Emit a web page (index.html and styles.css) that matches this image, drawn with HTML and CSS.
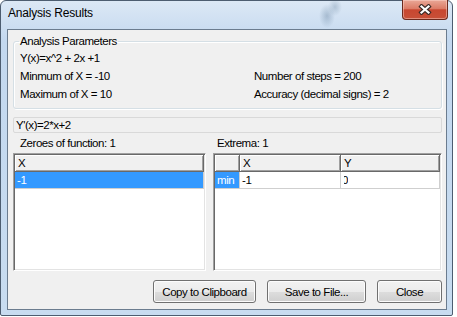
FILE: index.html
```html
<!DOCTYPE html>
<html lang="en">
<head>
  <meta charset="UTF-8" />
  <title>Analysis Results</title>
  <link rel="stylesheet" href="styles.css">
</head>
<body>

  <div class="window">
    <div class="titlebar">
      <span class="title">Analysis Results</span>
      <button class="close-btn" title="Close">
        <svg width="14" height="11" viewBox="0 0 14 11">
          <path d="M3.5 2.5 L10.5 8.5 M10.5 2.5 L3.5 8.5" stroke="#3d2c28" stroke-width="4.4" stroke-linecap="square" fill="none"/>
          <path d="M3.5 2.5 L10.5 8.5 M10.5 2.5 L3.5 8.5" stroke="#fff" stroke-width="2.2" stroke-linecap="square" fill="none"/>
        </svg>
      </button>
    </div>

    <div class="client">
      <fieldset class="params">
        <legend>Analysis Parameters</legend>
        <div class="param-grid">
          <div>Y(x)=x^2 + 2x +1</div><div></div>
          <div>Minmum of X = -10</div><div>Number of steps = 200</div>
          <div>Maximum of X = 10</div><div>Accuracy (decimal signs) = 2</div>
        </div>
      </fieldset>

      <div class="derivative">Y'(x)=2*x+2</div>

      <div class="panes">
        <div class="pane zeroes">
          <div class="pane-label">Zeroes of function: 1</div>
          <div class="grid">
            <div class="grid-row head"><div class="cell">X</div></div>
            <div class="grid-row"><div class="cell selected">-1</div></div>
          </div>
        </div>
        <div class="pane extrema">
          <div class="pane-label">Extrema: 1</div>
          <div class="grid">
            <div class="grid-row head"><div class="cell"></div><div class="cell">X</div><div class="cell">Y</div></div>
            <div class="grid-row"><div class="cell selected">min</div><div class="cell">-1</div><div class="cell flush"><span class="cut">0</span></div></div>
          </div>
        </div>
      </div>

      <div class="buttons">
        <button class="btn btn-copy">Copy to Clipboard</button>
        <button class="btn btn-save">Save to File...</button>
        <button class="btn btn-close">Close</button>
      </div>
    </div>
  </div>

</body>
</html>
```

FILE: styles.css
```css
* {
  box-sizing: border-box;
}
body {
  margin: 0;
  background: #fff;
  font-family: "Liberation Sans", Arial, sans-serif;
  font-size: 11.5px;
  letter-spacing: -0.45px;
  color: #000;
}
.window {
  width: 453px;
  height: 316px;
  border: 1px solid #4d5d70;
  border-radius: 6px 6px 2px 2px;
  background: linear-gradient(#dce8f5, #c3d8ef 40px, #c8dcf0);
  display: flex;
  flex-direction: column;
}
.titlebar {
  height: 28px;
  display: flex;
  justify-content: space-between;
  align-items: flex-start;
  background:
    radial-gradient(8px 12px at 326px 15px, rgba(85, 115, 145, 0.35), transparent),
    radial-gradient(7px 9px at 334px 6px, rgba(85, 115, 145, 0.3), transparent);
}
.title {
  padding: 5px 0 0 7px;
  line-height: 15px;
  font-size: 12px;
  letter-spacing: -0.2px;
}
.close-btn {
  width: 46px;
  height: 20px;
  margin: -1px 4px 0 0;
  padding: 0;
  border: 1px solid #6b2a1e;
  border-top: none;
  border-radius: 0 0 4px 4px;
  background: linear-gradient(#eaa897, #dc7c67 45%, #c84730 52%, #c85038);
  box-shadow: inset 0 0 0 1px rgba(255, 220, 210, 0.45);
  display: flex;
  align-items: center;
  justify-content: center;
}
.client {
  flex: 1;
  margin: 0 5px 5px 6px;
  border: 1px solid #6b7c8f;
  background: #f0f0f0;
  padding: 5px 4px 0 5px;
  display: flex;
  flex-direction: column;
}
.params {
  margin: 0;
  min-width: 0;
  padding: 1px 6px 5px;
  border: 1px solid #d5dfe5;
  border-radius: 3px;
  box-shadow: inset 1px 1px 0 #fff, 1px 1px 0 #fff;
}
.params legend {
  padding: 0 1px;
  margin-left: -1px;
  line-height: 13px;
}
.param-grid {
  display: grid;
  grid-template-columns: 234px 1fr;
  line-height: 18px;
}
.derivative {
  margin-top: 8px;
  height: 16px;
  border: 1px solid #d9d9d9;
  border-radius: 2px;
  padding-left: 2px;
  line-height: 14px;
}
.panes {
  display: flex;
  gap: 7px;
  margin-top: 4px;
}
.pane.zeroes {
  width: 193px;
}
.pane.extrema {
  flex: 1;
}
.pane-label {
  line-height: 13px;
  padding-left: 7px;
}
.extrema .pane-label {
  padding-left: 4px;
}
.grid {
  margin-top: 3px;
  height: 118px;
  border: 1px solid;
  border-color: #a0a0a0 #fff #fff #a0a0a0;
  padding: 1px;
  background: #fff;
  box-shadow: inset 1px 1px 0 #696969, inset -1px -1px 0 #e3e3e3;
}
.grid-row {
  display: grid;
  height: 17px;
}
.extrema .grid-row {
  grid-template-columns: 25px 101px 1fr;
}
.cell {
  padding-left: 2px;
  line-height: 16px;
  border-right: 1px solid #cfcfcf;
  border-bottom: 1px solid #cfcfcf;
  overflow: hidden;
  white-space: nowrap;
}
.head .cell {
  background: #f0f0f0;
  border-right-color: #696969;
  border-bottom-color: #696969;
  box-shadow: inset 1px 1px 0 #fff, inset -1px -1px 0 #a0a0a0;
  padding-left: 3px;
}
.cell.selected {
  background: #3399ff;
  color: #fff;
}
.cell.flush {
  padding-left: 1px;
}
.cut {
  display: inline-block;
  clip-path: inset(0 0 0 2px);
}
.buttons {
  display: flex;
  justify-content: flex-end;
  gap: 11px;
  margin-top: 9px;
}
.btn {
  height: 23px;
  padding: 0;
  font: inherit;
  letter-spacing: inherit;
  color: #000;
  border: 1px solid #707070;
  border-radius: 3px;
  background: linear-gradient(#f2f2f2, #ebebeb 50%, #dddddd 51%, #cfcfcf);
  box-shadow: inset 0 0 0 1px #fcfcfc;
}
.btn-copy {
  width: 103px;
}
.btn-save {
  width: 99px;
}
.btn-close {
  width: 65px;
}
```
